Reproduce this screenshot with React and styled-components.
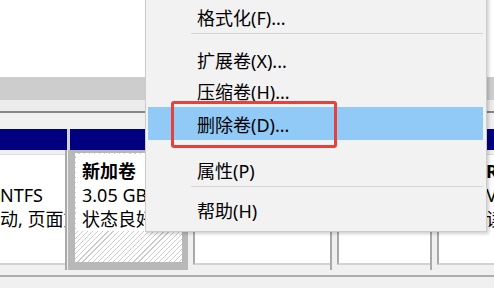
import React from "react";
import styled, { createGlobalStyle } from "styled-components";

const GlobalStyle = createGlobalStyle`
  *, *::before, *::after { box-sizing: border-box; }
  html, body { margin: 0; padding: 0; background: #f0f0f0; }
  body { font-family: "Noto Sans", "Noto Sans CJK SC", sans-serif; }
`;

const Screen = styled.div`
  position: relative;
  width: 494px;
  height: 288px;
  overflow: hidden;
  background: #f0f0f0;
  color: #000;
  font-size: 18px;
`;

const VolumeList = styled.div`
  height: 77px;
  background: #fff;
`;

const Splitter = styled.div`
  height: 23px;
  background: #cdcdcd;
`;

const DiskHeader = styled.div`
  height: 13px;
  margin-bottom: 16px;
  background: #ececec;
  border-bottom: 2px solid #858585;
`;

const DiskRow = styled.div`
  display: flex;
  height: 141px;
  margin-left: -30px;
`;

const Partition = styled.div`
  flex: 0 0 ${(p) => p.$w}px;
  width: ${(p) => p.$w}px;
  min-width: 0;
  overflow: hidden;
  display: flex;
  flex-direction: column;
`;

const Bar = styled.div`
  height: 21px;
  flex-shrink: 0;
  background: #000080;
  border-left: 3px solid #d2d2d2;
`;

const Body = styled.div`
  flex: 1;
  display: flex;
  min-width: 0;
  padding: 4px 0 5px 5px;
  border-right: 2px solid #a9a9a9;
`;

const Panel = styled.div`
  flex: 1;
  min-width: 0;
  overflow: hidden;
  padding: 4px 0 0 ${(p) => p.$indent}px;
  background: #fff;
  border-left: 2px solid #a9a9a9;
  border-top: 1px solid #dcdcdc;
  border-bottom: 2px solid #d2d2d2;
`;

const SelectedBody = styled.div`
  flex: 1;
  min-width: 0;
  margin-left: 1px;
  border-style: solid;
  border-color: #b8b8b8;
  border-width: 3px 6px 8px 7px;
  background: repeating-linear-gradient(
    135deg,
    #ffffff 0 2.8px,
    #cdcdcd 2.8px 3.6px
  );
`;

const Label = styled.div`
  height: 77px;
  margin: 1px 0 0 1px;
  padding: 5px 0 0 6px;
  background: #fff;
  overflow: hidden;
`;

const Line = styled.div`
  height: 24px;
  line-height: 24px;
  white-space: nowrap;
  font-weight: ${(p) => (p.$bold ? 700 : 400)};
`;

const Footer = styled.div`
  margin-top: 5px;
  height: 13px;
  border-top: 2px solid #adadad;
`;

const Menu = styled.div`
  position: absolute;
  left: 145px;
  top: -5px;
  width: 342px;
  padding: 4px 0 6px;
  background: #f2f2f2;
  border: 1px solid #cccccc;
  box-shadow: 2px 2px 3px rgba(0, 0, 0, 0.18);
`;

const MenuItem = styled.div`
  height: ${(p) => p.$h}px;
  display: flex;
  align-items: center;
  margin: 0 3px 0 2px;
  padding-left: 49px;
  white-space: nowrap;
  background: ${(p) => (p.$active ? "#91c9f7" : "transparent")};
`;

const MenuSeparator = styled.div`
  height: ${(p) => p.$h}px;
  margin: 0 3px 0 45px;
  border-top: 1px solid #d5d5d5;
`;

const MenuGap = styled.div`
  height: ${(p) => p.$h}px;
`;

const Callout = styled.div`
  position: absolute;
  left: 171px;
  top: 101px;
  width: 166px;
  height: 47px;
  border: 3px solid #e5413d;
  border-radius: 3px;
`;

const Lines = ({ lines }) =>
  lines.map((l, i) => (
    <Line key={i} $bold={i === 0}>
      {l || "\u00a0"}
    </Line>
  ));

export default function App() {
  return (
    <Screen>
      <GlobalStyle />
      <VolumeList />
      <Splitter />
      <DiskHeader />
      <DiskRow>
        <Partition $w={97}>
          <Bar />
          <Body>
            <Panel $indent={23}>
              <Lines lines={["", "NTFS", "动, 页面文件, 故障转储"]} />
            </Panel>
          </Body>
        </Partition>
        <Partition $w={121}>
          <Bar />
          <SelectedBody>
            <Label>
              <Lines lines={["新加卷", "3.05 GB NTFS", "状态良好 (基本数据分区)"]} />
            </Label>
          </SelectedBody>
        </Partition>
        <Partition $w={144}>
          <Bar />
          <Body>
            <Panel $indent={6} />
          </Body>
        </Partition>
        <Partition $w={100}>
          <Bar />
          <Body>
            <Panel $indent={6} />
          </Body>
        </Partition>
        <Partition $w={100}>
          <Bar />
          <Body>
            <Panel $indent={47}>
              <Lines lines={["R", "V", "读"]} />
            </Panel>
          </Body>
        </Partition>
      </DiskRow>
      <Footer />

      <Menu>
        <MenuItem $h={33}>格式化(F)...</MenuItem>
        <MenuSeparator $h={12} />
        <MenuItem $h={30}>扩展卷(X)...</MenuItem>
        <MenuItem $h={32}>压缩卷(H)...</MenuItem>
        <MenuItem $h={33} $active>
          删除卷(D)...
        </MenuItem>
        <MenuGap $h={14} />
        <MenuItem $h={32}>属性(P)</MenuItem>
        <MenuSeparator $h={9} />
        <MenuItem $h={30}>帮助(H)</MenuItem>
      </Menu>
      <Callout />
    </Screen>
  );
}
